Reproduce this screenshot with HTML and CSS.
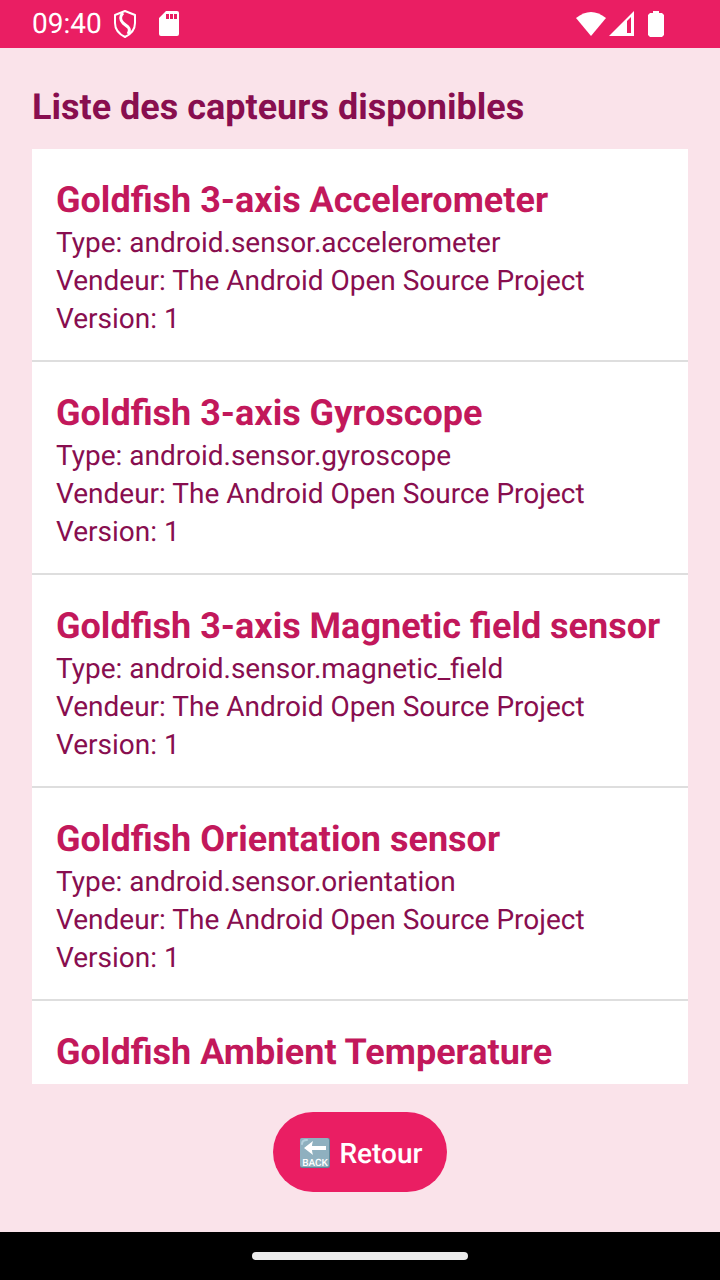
FILE: index.html
```html
<!DOCTYPE html>
<html lang="fr">
<head>
<meta charset="utf-8">
<meta name="viewport" content="width=device-width, initial-scale=1">
<title>Liste des capteurs disponibles</title>
<link rel="stylesheet" href="styles.css">
</head>
<body>
<header class="status-bar">
  <div class="status-left">
    <span class="clock">09:40</span>
    <svg class="icon-shield" width="24" height="30" viewBox="0 0 24 30" fill="none" stroke="#fff" stroke-width="2" stroke-linejoin="round" aria-hidden="true">
      <path d="M12 2 L22 6 V14 C22 20 18 25 12 28 C6 25 2 20 2 14 V6 Z"/>
      <path stroke-width="3" d="M10 4 C7 7 7 11 10 14 L15 18 C17 20 17 22 15 25"/>
    </svg>
    <svg class="icon-card" width="20" height="26" viewBox="0 0 20 26" aria-hidden="true">
      <path fill="#fff" fill-rule="evenodd" d="M7 0 H18 Q20 0 20 2 V23 Q20 25 18 25 H2 Q0 25 0 23 V7 Z M7 3 V8 H10 V3 Z M11 3 V8 H14 V3 Z M15 3 V8 H18 V3 Z"/>
    </svg>
  </div>
  <div class="status-right">
    <svg width="30" height="26" viewBox="0 0 30 26" aria-hidden="true"><path fill="#fff" d="M0 7 Q15 -5 30 7 L15 25 Z"/></svg>
    <svg class="icon-signal" width="25" height="26" viewBox="0 0 25 26" aria-hidden="true"><path fill="#fff" fill-rule="evenodd" d="M25 0 V25 H0 Z M22 6 L18 10 V22 H22 Z"/></svg>
    <svg class="icon-battery" width="16" height="26" viewBox="0 0 16 26" aria-hidden="true"><path fill="#fff" d="M5 0 H11 V2 H14 L16 4 V24 L14 26 H2 L0 24 V4 L2 2 H5 Z"/></svg>
  </div>
</header>
<main class="screen">
  <h1 class="page-title">Liste des capteurs disponibles</h1>
  <ul class="sensor-list">
    <li class="sensor">
      <h2 class="sensor-name">Goldfish 3-axis Accelerometer</h2>
      <p class="sensor-line">Type: android.sensor.accelerometer</p>
      <p class="sensor-line">Vendeur: The Android Open Source Project</p>
      <p class="sensor-line">Version: 1</p>
    </li>
    <li class="sensor">
      <h2 class="sensor-name">Goldfish 3-axis Gyroscope</h2>
      <p class="sensor-line">Type: android.sensor.gyroscope</p>
      <p class="sensor-line">Vendeur: The Android Open Source Project</p>
      <p class="sensor-line">Version: 1</p>
    </li>
    <li class="sensor">
      <h2 class="sensor-name">Goldfish 3-axis Magnetic field sensor</h2>
      <p class="sensor-line">Type: android.sensor.magnetic_field</p>
      <p class="sensor-line">Vendeur: The Android Open Source Project</p>
      <p class="sensor-line">Version: 1</p>
    </li>
    <li class="sensor">
      <h2 class="sensor-name">Goldfish Orientation sensor</h2>
      <p class="sensor-line">Type: android.sensor.orientation</p>
      <p class="sensor-line">Vendeur: The Android Open Source Project</p>
      <p class="sensor-line">Version: 1</p>
    </li>
    <li class="sensor">
      <h2 class="sensor-name">Goldfish Ambient Temperature</h2>
    </li>
  </ul>
  <button class="back-button" type="button">
    <svg width="32" height="32" viewBox="0 0 32 32" aria-hidden="true">
      <rect x="1" y="1" width="30" height="30" rx="2" fill="#5f8799"/>
      <rect x="1" y="1" width="29" height="29" rx="2" fill="#8fb0bf"/>
      <path d="M3 7 Q3 3 8 3" fill="none" stroke="#b5d0dc" stroke-width="2" stroke-linecap="round"/>
      <path d="M5 11 L14 4 Q13 7 13 9 H27 V13 H13 Q13 15 14 18 Z" fill="#fff"/>
      <text class="back-label" x="16" y="29" text-anchor="middle">BACK</text>
    </svg>
    <span>Retour</span>
  </button>
</main>
<footer class="nav-bar"><div class="nav-handle"></div></footer>
</body>
</html>
```
FILE: styles.css
```css
* {
  box-sizing: border-box;
}

body {
  margin: 0;
  height: 100vh;
  display: flex;
  flex-direction: column;
  background: #fae3ea;
  font-family: Roboto, "Liberation Sans", sans-serif;
  text-rendering: geometricPrecision;
}

h1, h2, p, ul {
  margin: 0;
  padding: 0;
}

.status-bar {
  height: 48px;
  flex: none;
  display: flex;
  align-items: center;
  justify-content: space-between;
  padding: 0 56px 0 32px;
  background: #ea1e63;
  color: #fff;
}

.status-left,
.status-right {
  display: flex;
  align-items: center;
}

.clock {
  font-size: 28px;
  line-height: 48px;
}

.icon-shield {
  margin-left: 11px;
}

.icon-card {
  margin-left: 22px;
}

.icon-signal {
  margin-left: 3px;
}

.icon-battery {
  margin-left: 14px;
}

.screen {
  flex: 1;
  min-height: 0;
  display: flex;
  flex-direction: column;
  padding: 32px 32px 40px;
}

.page-title {
  padding-bottom: 14px;
  font-size: 36px;
  line-height: 55px;
  font-weight: 700;
  color: #880e4f;
}

.sensor-list {
  flex: 1;
  min-height: 0;
  overflow: hidden;
  list-style: none;
  background: #fff;
}

.sensor {
  padding: 27px 24px 22px;
  border-bottom: 2px solid #dedede;
}

.sensor:last-child {
  border-bottom: 0;
}

.sensor-name {
  font-size: 36px;
  line-height: 48px;
  font-weight: 700;
  color: #c2185b;
}

.sensor-line {
  font-size: 28px;
  line-height: 38px;
  color: #880e4f;
}

.back-button {
  flex: none;
  align-self: center;
  display: flex;
  align-items: center;
  gap: 9px;
  height: 80px;
  margin-top: 28px;
  padding: 2px 25px 0 26px;
  border: 0;
  border-radius: 40px;
  background: #ea1e63;
  color: #fff;
  font-family: inherit;
  font-size: 28px;
  font-weight: 500;
  text-rendering: inherit;
}

.back-label {
  font-size: 10px;
  font-weight: 500;
  fill: #fff;
}

.nav-bar {
  flex: none;
  height: 48px;
  display: flex;
  align-items: center;
  justify-content: center;
  background: #000;
}

.nav-handle {
  width: 30%;
  height: 8px;
  border-radius: 4px;
  background: #ebebeb;
}
```
